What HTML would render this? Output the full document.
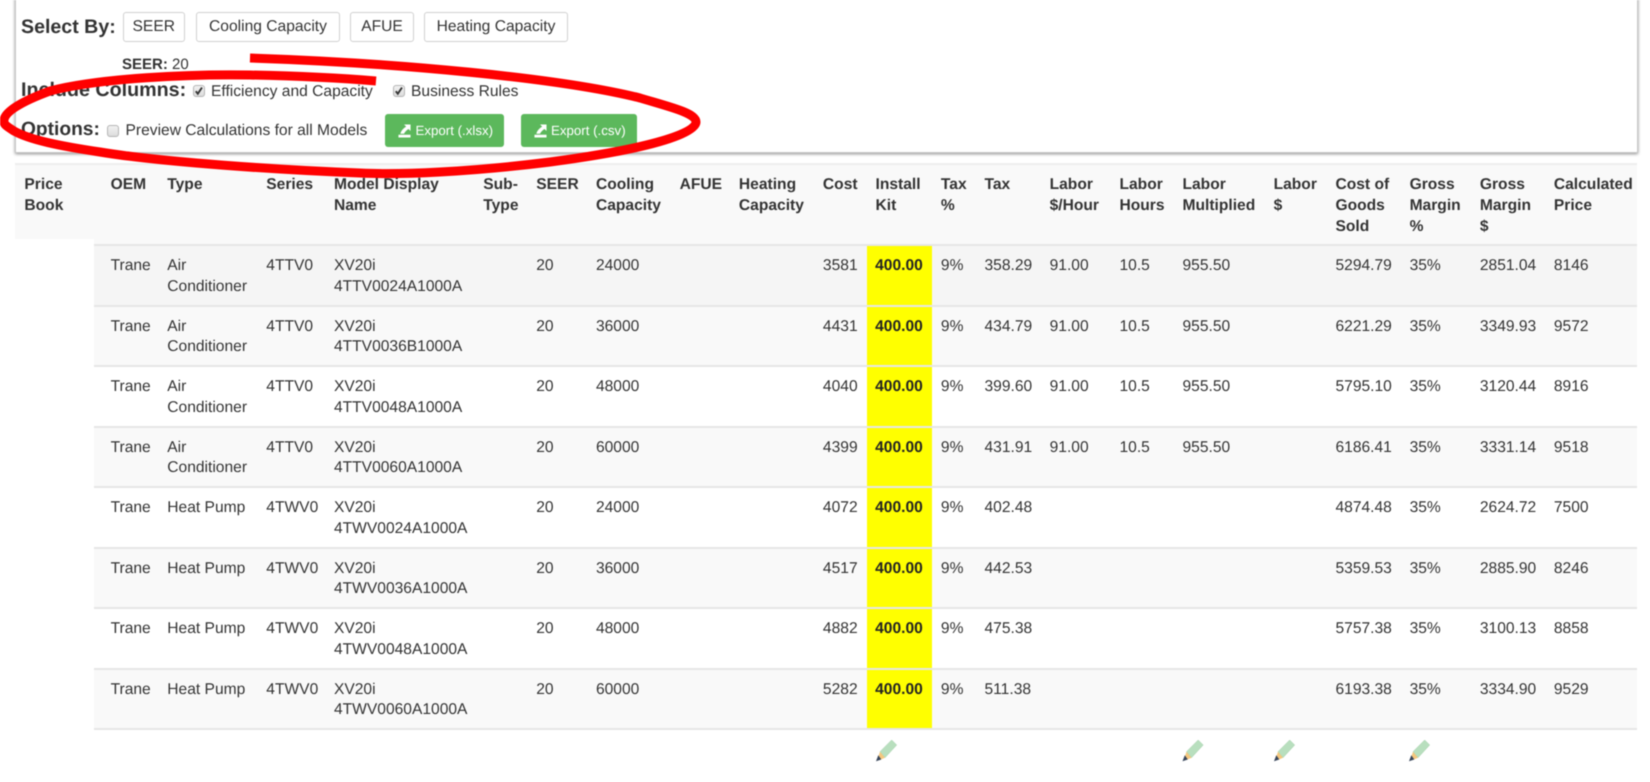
<!DOCTYPE html>
<html lang="en"><head><meta charset="utf-8"><title>Price Book</title>
<style>
html,body{margin:0;padding:0;width:1650px;height:782px;overflow:hidden;background:#fff}
body{position:relative;font-family:"Liberation Sans",Arial,sans-serif;color:#333;font-size:15.6px;line-height:20.8px;text-rendering:geometricPrecision}
#w{position:absolute;left:0;top:0;width:1650px;height:782px;overflow:hidden;filter:blur(.4px);background:#fff}
.abs{position:absolute;white-space:nowrap}
#panel{position:absolute;left:15px;top:-10px;width:1621px;height:161px;background:#fff;border:1px solid #c8c8c8;box-shadow:0 1px 3px rgba(0,0,0,.45)}
.h{position:absolute;white-space:nowrap;font-weight:bold;color:#333;line-height:24px}
.btn{position:absolute;box-sizing:border-box;top:12px;height:30px;background:#fff;border:1px solid #d0d0d0;border-radius:3px;display:flex;align-items:center;justify-content:center;font-size:15.6px;color:#333}
.gr{position:absolute;box-sizing:border-box;top:114px;height:33px;background:#5cb85c;border-radius:3px;color:#fff;font-size:13.3px;line-height:33px;white-space:nowrap}
.gr svg{position:absolute;left:13px;top:10px}
.gr span{position:absolute;top:0}
.cb{position:absolute;box-sizing:border-box;width:12px;height:12px;border-radius:3px;background:linear-gradient(#f2f2f2,#dcdcdc);border:1px solid #b5b5b5}
.cb svg{position:absolute;left:0;top:0}
#head{position:absolute;left:15px;top:163px;width:1622px;height:82px;background:#f9f9f9;border-top:2px solid #eee;box-sizing:border-box}
#hl{position:absolute;left:15px;top:238.5px;width:79px;height:8px;background:#fff}
.g{position:absolute;left:24.4px;display:grid;grid-template-columns:86.2px 56.7px 99px 67.7px 149.3px 53px 59.7px 83.7px 59.3px 84px 52.6px 65.4px 43.6px 65.1px 69.9px 63px 91.1px 61.9px 74.1px 70.3px 74px 83px}
.g>div{white-space:nowrap}
#hr{top:175px;font-weight:bold}
.y{position:absolute;left:867px;top:245px;width:65px;height:484px;background:#ff0}
.line{position:absolute;left:94px;width:1543px;height:2px;background:#e6e6e6}
.d{font-weight:bold;color:#222;margin-left:-.4px}
</style></head><body><div id="w">

<div id="panel"></div>
<div class="h" style="left:21px;top:15px;font-size:19.6px">Select By:</div>
<div class="btn" style="left:122.500px;width:62.500px">SEER</div>
<div class="btn" style="left:196px;width:144px">Cooling Capacity</div>
<div class="btn" style="left:350px;width:64px">AFUE</div>
<div class="btn" style="left:424px;width:144px">Heating Capacity</div>

<div class="abs" style="left:122px;top:55px;font-size:15px"><b>SEER:</b> 20</div>

<div class="h" style="left:21px;top:78px;font-size:19.7px">Include Columns:</div>
<div class="cb" style="left:192.500px;top:84.500px"><svg width="10" height="10" viewBox="0 0 10 10"><path d="M1.800 5.200l2 2.600L8 1.500" fill="none" stroke="#333" stroke-width="1.900"/></svg></div>
<div class="abs" style="left:211px;top:81.500px">Efficiency and Capacity</div>
<div class="cb" style="left:392.500px;top:84.500px"><svg width="10" height="10" viewBox="0 0 10 10"><path d="M1.800 5.200l2 2.600L8 1.500" fill="none" stroke="#333" stroke-width="1.900"/></svg></div>
<div class="abs" style="left:411px;top:81.500px">Business Rules</div>

<div class="h" style="left:21px;top:118px;font-size:19.2px">Options:</div>
<div class="cb" style="left:106.500px;top:125px"></div>
<div class="abs" style="left:125.500px;top:121px">Preview Calculations for all Models</div>

<div class="gr" style="left:385px;width:119px"><svg width="13" height="14" viewBox="0 0 14 15"><path d="M0.500 11.500h13V14.500H0.500z M6.500 0.500H13.500V7.500L11.300 5.300C9.500 6.500 7.500 8 6.500 10.500H2.500C3.500 7 5.800 4.500 8.800 2.800z" fill="#fff"/></svg><span style="left:30.500px">Export (.xlsx)</span></div>
<div class="gr" style="left:521px;width:116px"><svg width="13" height="14" viewBox="0 0 14 15"><path d="M0.500 11.500h13V14.500H0.500z M6.500 0.500H13.500V7.500L11.300 5.300C9.500 6.500 7.500 8 6.500 10.500H2.500C3.500 7 5.800 4.500 8.800 2.800z" fill="#fff"/></svg><span style="left:30px">Export (.csv)</span></div>

<div id="head"></div>
<div style="position:absolute;left:94px;top:245px;width:1543px;height:60.4px;background:#f5f5f5"></div>
<div style="position:absolute;left:94px;top:305.4px;width:1543px;height:60.4px;background:#f9f9f9"></div>
<div style="position:absolute;left:94px;top:426.2px;width:1543px;height:60.4px;background:#f9f9f9"></div>
<div style="position:absolute;left:94px;top:547px;width:1543px;height:60.4px;background:#f9f9f9"></div>
<div style="position:absolute;left:94px;top:667.8px;width:1543px;height:60.4px;background:#f9f9f9"></div>
<div id="hl"></div>
<div class="y"></div>
<div class="line" style="top:244px"></div>
<div class="line" style="top:304.500px"></div>
<div class="line" style="top:365px"></div>
<div class="line" style="top:425.500px"></div>
<div class="line" style="top:486px"></div>
<div class="line" style="top:546.500px"></div>
<div class="line" style="top:607px"></div>
<div class="line" style="top:667.500px"></div>
<div class="line" style="top:728px"></div>

<div class="g" id="hr">
<div>Price<br>Book</div><div>OEM</div><div>Type</div><div>Series</div><div>Model Display<br>Name</div><div>Sub-<br>Type</div><div>SEER</div><div>Cooling<br>Capacity</div><div>AFUE</div><div>Heating<br>Capacity</div><div>Cost</div><div>Install<br>Kit</div><div>Tax<br>%</div><div>Tax</div><div>Labor<br>$/Hour</div><div>Labor<br>Hours</div><div>Labor<br>Multiplied</div><div>Labor<br>$</div><div>Cost of<br>Goods<br>Sold</div><div>Gross<br>Margin<br>%</div><div>Gross<br>Margin<br>$</div><div>Calculated<br>Price</div>
</div>

<div class="g" style="top:256px"><div></div><div>Trane</div><div>Air<br>Conditioner</div><div>4TTV0</div><div>XV20i<br>4TTV0024A1000A</div><div></div><div>20</div><div>24000</div><div></div><div></div><div>3581</div><div class="d">400.00</div><div>9%</div><div>358.29</div><div>91.00</div><div>10.5</div><div>955.50</div><div></div><div>5294.79</div><div>35%</div><div>2851.04</div><div>8146</div></div>
<div class="g" style="top:316.500px"><div></div><div>Trane</div><div>Air<br>Conditioner</div><div>4TTV0</div><div>XV20i<br>4TTV0036B1000A</div><div></div><div>20</div><div>36000</div><div></div><div></div><div>4431</div><div class="d">400.00</div><div>9%</div><div>434.79</div><div>91.00</div><div>10.5</div><div>955.50</div><div></div><div>6221.29</div><div>35%</div><div>3349.93</div><div>9572</div></div>
<div class="g" style="top:377px"><div></div><div>Trane</div><div>Air<br>Conditioner</div><div>4TTV0</div><div>XV20i<br>4TTV0048A1000A</div><div></div><div>20</div><div>48000</div><div></div><div></div><div>4040</div><div class="d">400.00</div><div>9%</div><div>399.60</div><div>91.00</div><div>10.5</div><div>955.50</div><div></div><div>5795.10</div><div>35%</div><div>3120.44</div><div>8916</div></div>
<div class="g" style="top:437.500px"><div></div><div>Trane</div><div>Air<br>Conditioner</div><div>4TTV0</div><div>XV20i<br>4TTV0060A1000A</div><div></div><div>20</div><div>60000</div><div></div><div></div><div>4399</div><div class="d">400.00</div><div>9%</div><div>431.91</div><div>91.00</div><div>10.5</div><div>955.50</div><div></div><div>6186.41</div><div>35%</div><div>3331.14</div><div>9518</div></div>
<div class="g" style="top:498px"><div></div><div>Trane</div><div>Heat Pump</div><div>4TWV0</div><div>XV20i<br>4TWV0024A1000A</div><div></div><div>20</div><div>24000</div><div></div><div></div><div>4072</div><div class="d">400.00</div><div>9%</div><div>402.48</div><div></div><div></div><div></div><div></div><div>4874.48</div><div>35%</div><div>2624.72</div><div>7500</div></div>
<div class="g" style="top:558.500px"><div></div><div>Trane</div><div>Heat Pump</div><div>4TWV0</div><div>XV20i<br>4TWV0036A1000A</div><div></div><div>20</div><div>36000</div><div></div><div></div><div>4517</div><div class="d">400.00</div><div>9%</div><div>442.53</div><div></div><div></div><div></div><div></div><div>5359.53</div><div>35%</div><div>2885.90</div><div>8246</div></div>
<div class="g" style="top:619px"><div></div><div>Trane</div><div>Heat Pump</div><div>4TWV0</div><div>XV20i<br>4TWV0048A1000A</div><div></div><div>20</div><div>48000</div><div></div><div></div><div>4882</div><div class="d">400.00</div><div>9%</div><div>475.38</div><div></div><div></div><div></div><div></div><div>5757.38</div><div>35%</div><div>3100.13</div><div>8858</div></div>
<div class="g" style="top:679.500px"><div></div><div>Trane</div><div>Heat Pump</div><div>4TWV0</div><div>XV20i<br>4TWV0060A1000A</div><div></div><div>20</div><div>60000</div><div></div><div></div><div>5282</div><div class="d">400.00</div><div>9%</div><div>511.38</div><div></div><div></div><div></div><div></div><div>6193.38</div><div>35%</div><div>3334.90</div><div>9529</div></div>

<svg style="position:absolute;left:0;top:0" width="1650" height="782" viewBox="0 0 1650 782">
<defs>
<g id="pen">
<path d="M15.700 0 L20.700 5 L9 17.700 L4 11.700 Z" fill="#b8dfbe" stroke="#a3cfaa" stroke-width=".5"/>
<path d="M4 11.700 L9 17.700 L5 19.500 L2.500 16 Z" fill="#f5c77e"/>
<path d="M2.300 15.300 L5.300 19.500 L0 21.200 Z" fill="#37455a"/>
</g>
</defs>
<use href="#pen" x="876" y="740"/>
<use href="#pen" x="1182.500" y="740"/>
<use href="#pen" x="1274" y="740"/>
<use href="#pen" x="1409" y="740"/>
<path d="M250 58 C400 63 560 78 640 98 C670 107 696 113 696 122 C696 135 640 150 550 162 C470 172 400 175 360 173 C280 170 160 162 100 152 C60 146 30 140 14 131 C6 126 3 124 4 120 C5 112 20 102 50 91 C100 78 190 74 250 75 C300 76 340 78 376 81" fill="none" stroke="#ff0000" stroke-width="9"/>
</svg>
</div></body></html>
